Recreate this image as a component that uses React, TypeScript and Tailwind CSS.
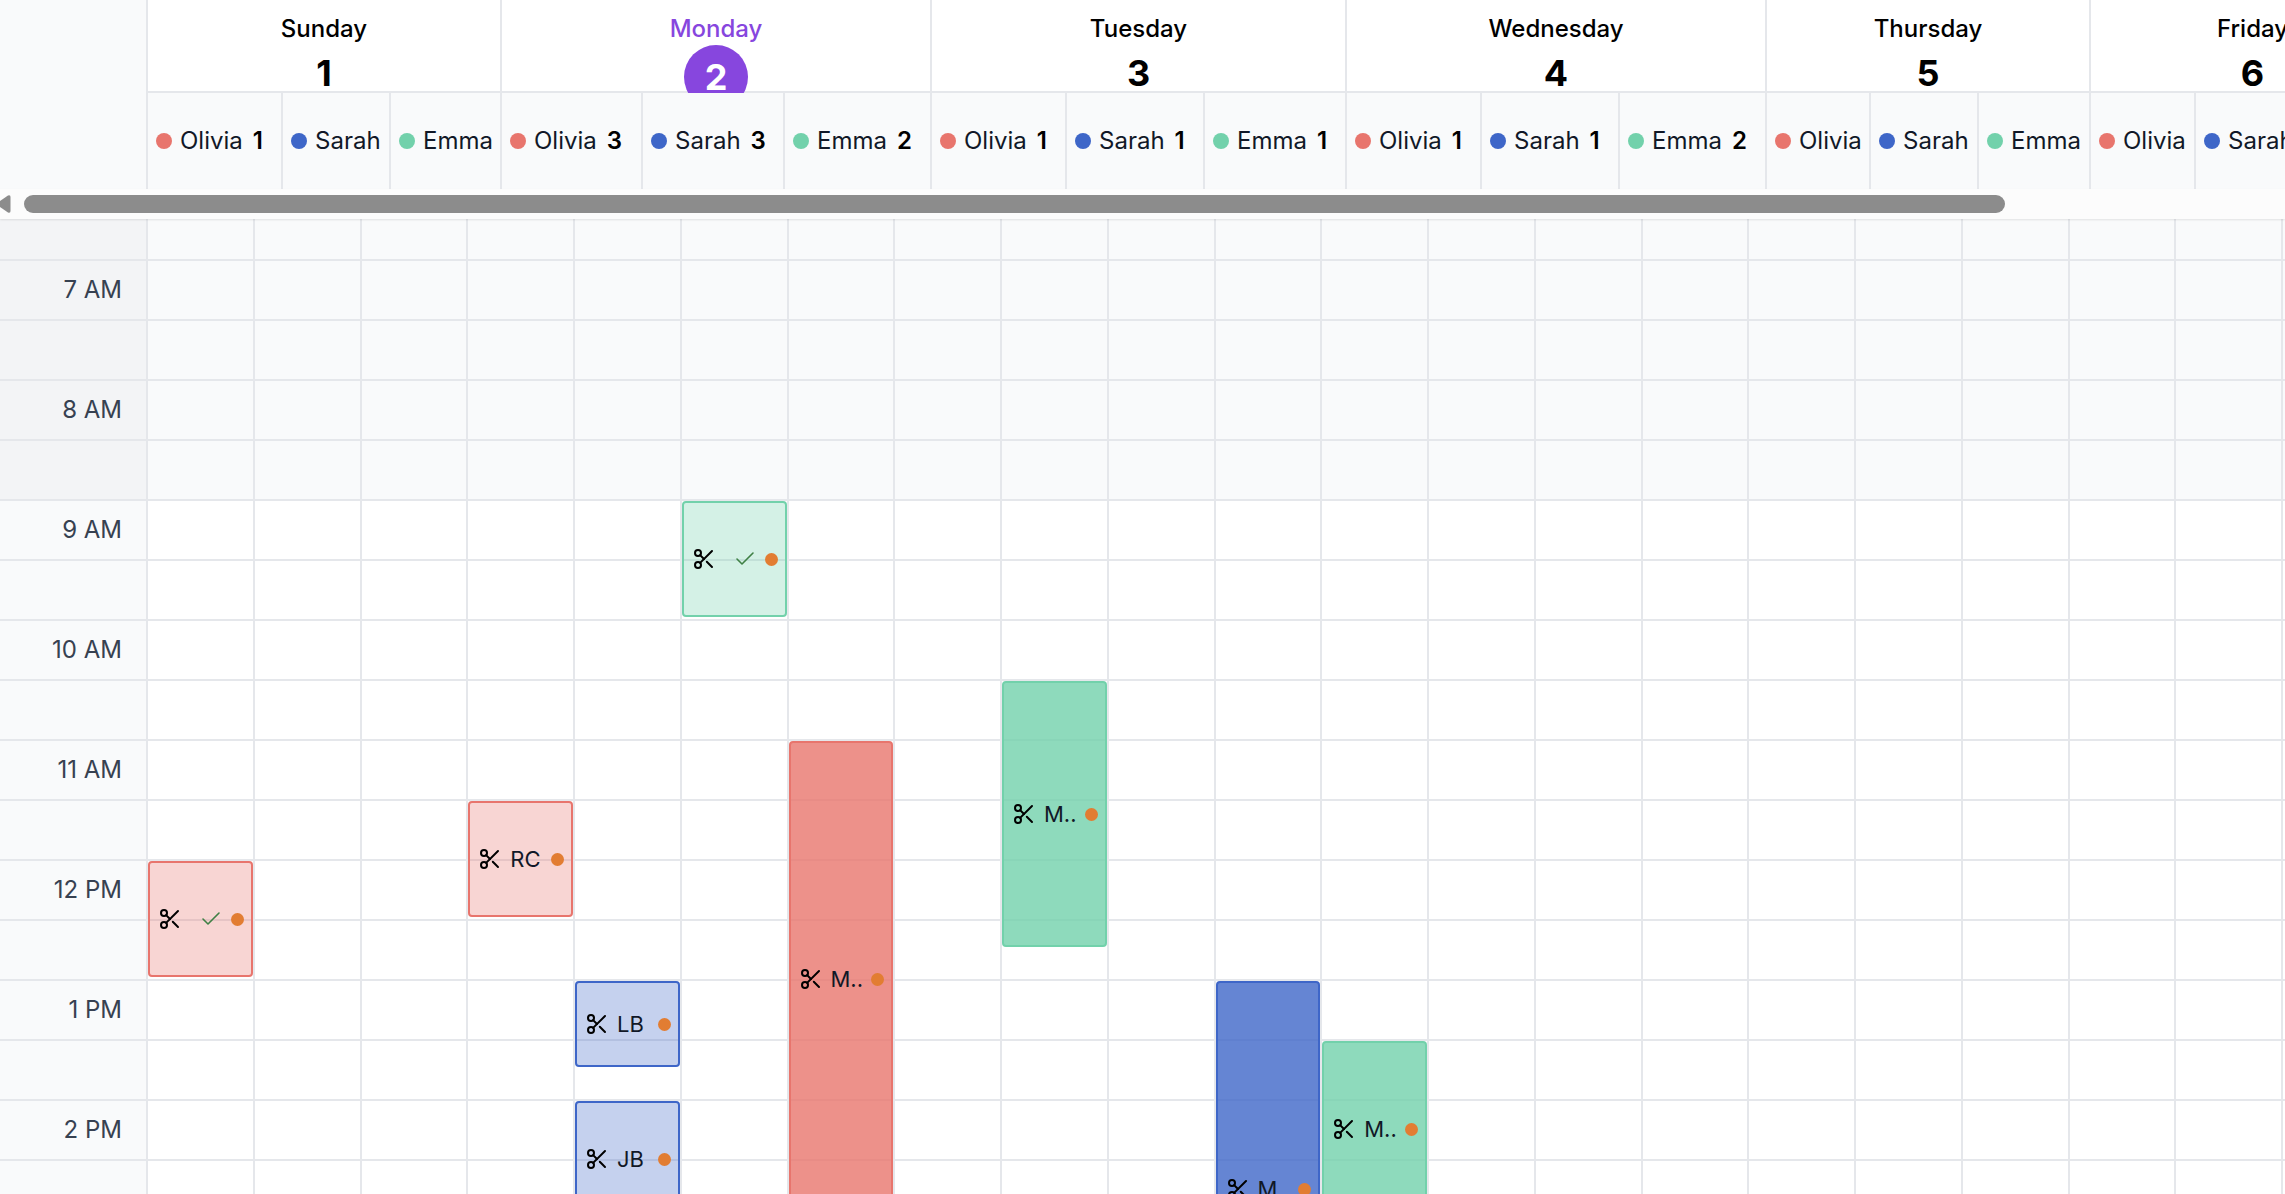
import { Scissors, Check } from "lucide-react";

type Staff = { name: string; dot: string; w: string; count?: number };
type Day = { name: string; date: number; today?: boolean; staff: Staff[] };

const RED = "bg-[#e8756d]";
const BLUE = "bg-[#3e66c8]";
const GREEN = "bg-[#72d1ab]";

const days: Day[] = [
  {
    name: "Sunday",
    date: 1,
    staff: [
      { name: "Olivia", dot: RED, w: "w-[135px]", count: 1 },
      { name: "Sarah", dot: BLUE, w: "w-[108px]" },
      { name: "Emma", dot: GREEN, w: "w-[111px]" },
    ],
  },
  {
    name: "Monday",
    date: 2,
    today: true,
    staff: [
      { name: "Olivia", dot: RED, w: "w-[141px]", count: 3 },
      { name: "Sarah", dot: BLUE, w: "w-[142px]", count: 3 },
      { name: "Emma", dot: GREEN, w: "w-[147px]", count: 2 },
    ],
  },
  {
    name: "Tuesday",
    date: 3,
    staff: [
      { name: "Olivia", dot: RED, w: "w-[135px]", count: 1 },
      { name: "Sarah", dot: BLUE, w: "w-[138px]", count: 1 },
      { name: "Emma", dot: GREEN, w: "w-[142px]", count: 1 },
    ],
  },
  {
    name: "Wednesday",
    date: 4,
    staff: [
      { name: "Olivia", dot: RED, w: "w-[135px]", count: 1 },
      { name: "Sarah", dot: BLUE, w: "w-[138px]", count: 1 },
      { name: "Emma", dot: GREEN, w: "w-[147px]", count: 2 },
    ],
  },
  {
    name: "Thursday",
    date: 5,
    staff: [
      { name: "Olivia", dot: RED, w: "w-[104px]" },
      { name: "Sarah", dot: BLUE, w: "w-[108px]" },
      { name: "Emma", dot: GREEN, w: "w-[112px]" },
    ],
  },
  {
    name: "Friday",
    date: 6,
    staff: [
      { name: "Olivia", dot: RED, w: "w-[105px]" },
      { name: "Sarah", dot: BLUE, w: "w-[108px]" },
      { name: "Emma", dot: GREEN, w: "w-[112px]" },
    ],
  },
];

type Ev = {
  col: number;
  row: number;
  h: number;
  box: string;
  label?: string;
  check?: boolean;
};

const events: Ev[] = [
  { col: 5, row: 5, h: 116, box: "bg-[#72d1ab]/30 border-[#72d1ab]", check: true },
  { col: 0, row: 11, h: 116, box: "bg-[#e8756d]/30 border-[#e8756d]", check: true },
  { col: 3, row: 10, h: 116, box: "bg-[#e8756d]/30 border-[#e8756d]", label: "RC" },
  { col: 6, row: 9, h: 476, box: "bg-[#e8756d]/80 border-[#e8756d]", label: "M.." },
  { col: 8, row: 8, h: 266, box: "bg-[#72d1ab]/80 border-[#72d1ab]", label: "M.." },
  { col: 4, row: 13, h: 86, box: "bg-[#3e66c8]/30 border-[#3e66c8]", label: "LB" },
  { col: 4, row: 15, h: 116, box: "bg-[#3e66c8]/30 border-[#3e66c8]", label: "JB" },
  { col: 10, row: 13, h: 416, box: "bg-[#3e66c8]/80 border-[#3e66c8]", label: "M" },
  { col: 11, row: 14, h: 176, box: "bg-[#72d1ab]/80 border-[#72d1ab]", label: "M.." },
];

const hours: Record<number, string> = {
  1: "7 AM",
  3: "8 AM",
  5: "9 AM",
  7: "10 AM",
  9: "11 AM",
  11: "12 PM",
  13: "1 PM",
  15: "2 PM",
};

const ROWS = Array.from({ length: 17 }, (_, i) => i);
const COLS = Array.from({ length: 21 }, (_, i) => i);
const CLOSED_UNTIL = 5;

function EventCard({ ev }: { ev: Ev }) {
  return (
    <div
      className={`absolute top-0 left-0 right-0 z-10 flex items-center rounded-[4px] border-2 pl-[8px] pr-[7px] ${ev.box}`}
      style={{ height: ev.h }}
    >
      <Scissors size={24} strokeWidth={2} className="shrink-0 text-black" />
      {ev.label && (
        <span className="ml-[8px] text-[22px] leading-none text-[#111827]">{ev.label}</span>
      )}
      {ev.check && (
        <Check size={24} strokeWidth={1.6} className="ml-[17px] shrink-0 text-[#3f8045]" />
      )}
      <span className="ml-auto size-[13px] shrink-0 rounded-full bg-[#e27d32]" />
    </div>
  );
}

function DayHeader({ day }: { day: Day }) {
  return (
    <div className="flex shrink-0 flex-col">
      <div className="h-[93px] overflow-hidden bg-white">
        <div className="box-border flex h-[93px] flex-col items-center border-r-2 border-b-2 border-[#e5e7eb] pt-[11px]">
          <div
            className={`h-[35px] text-[24px] leading-[35px] font-medium ${
              day.today ? "text-[#8746de]" : "text-black"
            }`}
          >
            {day.name}
          </div>
          <div className="flex h-[52px] items-center justify-center">
            {day.today ? (
              <div className="mt-[10px] flex size-[64px] shrink-0 items-center justify-center rounded-full bg-[#8746de] text-[36px] leading-none font-bold text-white">
                {day.date}
              </div>
            ) : (
              <span className="mt-[8px] text-[36px] leading-[32px] font-bold text-black">{day.date}</span>
            )}
          </div>
        </div>
      </div>
      <div className="flex h-[96px]">
        {day.staff.map((s) => (
          <div
            key={s.name}
            className={`box-border flex shrink-0 items-center overflow-hidden border-r-2 border-[#e5e7eb] bg-[#f9fafb] pl-[8px] ${s.w}`}
          >
            <span className={`size-[16px] shrink-0 rounded-full ${s.dot}`} />
            <span className="ml-[8px] text-[24px] leading-none text-[#111827]">{s.name}</span>
            {s.count !== undefined && (
              <span className="ml-[10px] text-[24px] leading-none font-semibold text-black">
                {s.count}
              </span>
            )}
          </div>
        ))}
      </div>
    </div>
  );
}

export default function App() {
  return (
    <div className="flex h-[1194px] w-[2285px] flex-col overflow-hidden bg-white font-['Inter',sans-serif]">
      <div className="flex h-[189px] shrink-0">
        <div className="box-border w-[148px] shrink-0 border-r-2 border-[#e5e7eb] bg-[#f9fafb]" />
        {days.map((d) => (
          <DayHeader key={d.name} day={d} />
        ))}
      </div>

      <div className="relative z-20 flex h-[30px] shrink-0 items-center bg-[#fcfcfc] shadow-[0_1px_2px_rgba(0,0,0,0.1)]">
        <svg width="11" height="18" viewBox="0 0 11 18" className="shrink-0">
          <path d="M0 6 L8 0.5 Q10.5 -0.5 10.5 2 L10.5 16 Q10.5 18.5 8 17.5 L0 12 Z" fill="#8c8c8c" />
        </svg>
        <div className="ml-[13px] h-[18px] w-[1981px] rounded-full bg-[#8c8c8c]" />
      </div>

      <div className="flex min-h-0 flex-1">
        <div className="w-[148px] shrink-0">
          {ROWS.map((r) => (
            <div
              key={r}
              className={`box-border flex items-center justify-end border-r-2 border-b-2 border-[#e5e7eb] pr-[24px] text-[24px] text-[#374151] ${
                r === 0 ? "h-[42px]" : "h-[60px]"
              } ${r < CLOSED_UNTIL ? "bg-[#f3f4f6]" : "bg-[#f9fafb]"}`}
            >
              {hours[r]}
            </div>
          ))}
        </div>
        <div className="grid shrink-0 grid-cols-[repeat(21,106.75px)] content-start">
          {ROWS.map((r) =>
            COLS.map((c) => {
              const ev = events.find((e) => e.row === r && e.col === c);
              return (
                <div
                  key={`${r}-${c}`}
                  className={`relative box-border border-r-2 border-b-2 border-[#e5e7eb] ${
                    r === 0 ? "h-[42px]" : "h-[60px]"
                  } ${r < CLOSED_UNTIL ? "bg-[#f9fafb]" : "bg-white"}`}
                >
                  {ev && <EventCard ev={ev} />}
                </div>
              );
            })
          )}
        </div>
      </div>
    </div>
  );
}
